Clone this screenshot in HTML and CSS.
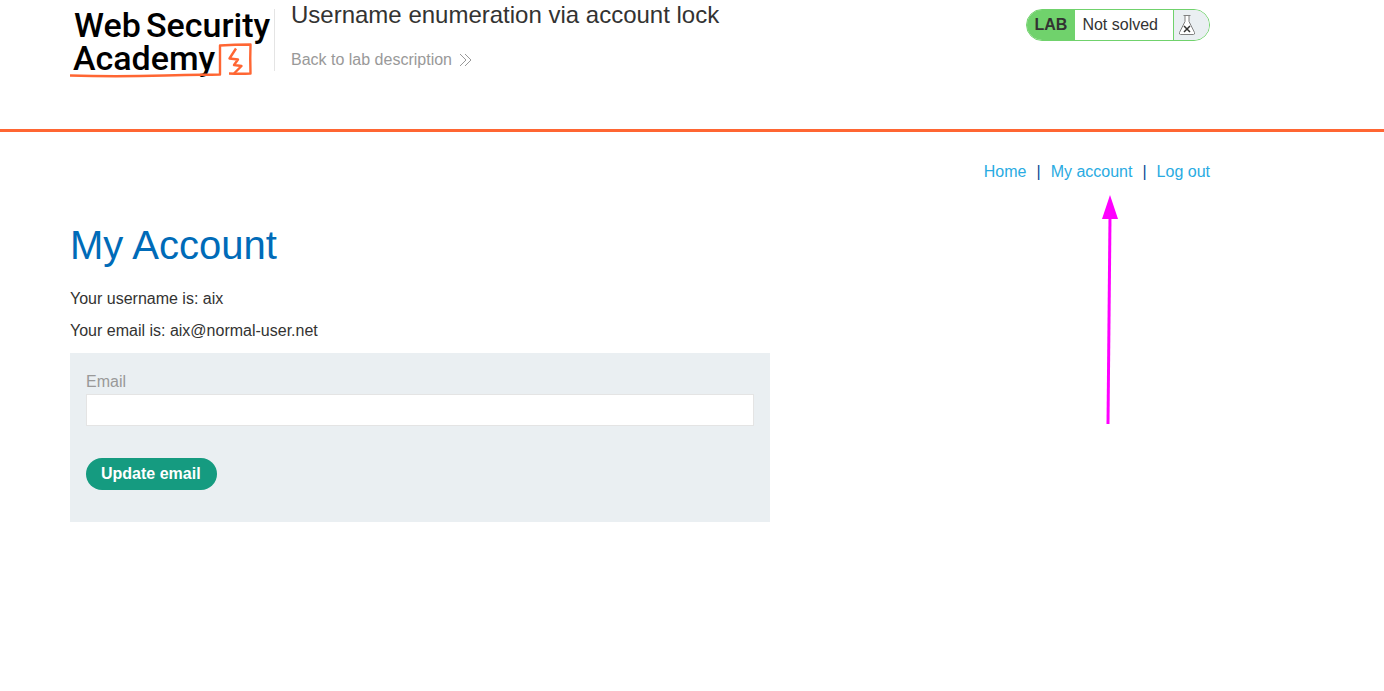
FILE: index.html
```html
<!DOCTYPE html>
<html lang="en">
<head>
<meta charset="utf-8">
<title>Username enumeration via account lock</title>
<link rel="stylesheet" href="styles.css">
</head>
<body>
<header class="lab-header">
  <div class="container lab-bar">
    <svg class="logo" viewBox="0 0 200 72" role="img" aria-label="Web Security Academy">
      <g class="logo-text">
        <text x="4" y="29">Web</text>
        <text x="76" y="29">Security</text>
        <text x="3" y="62">Academy</text>
      </g>
      <path class="logo-line" d="M0 67.500C30 68.500 60 68.500 95 67.500S130 67 150 66.500V37.500Q165 36.500 180.500 36.500Q180 50 180.500 65.500Q170 66 159 65.500"/>
      <path class="logo-line" d="M166 40.500L159.500 50.500L168 51.500L164 57L171.500 58L164 65.500"/>
    </svg>
    <div class="title-block">
      <h2 class="lab-title">Username enumeration via account lock</h2>
      <a class="back-link" href="#">Back to lab description
        <svg class="chevrons" viewBox="0 0 13 14" aria-hidden="true"><path d="M1 1l6 6-6 6M6 1l6 6-6 6"/></svg>
      </a>
    </div>
    <div class="status">
      <span class="status-tag">LAB</span>
      <span class="status-text">Not solved</span>
      <span class="status-icon">
        <svg viewBox="0 0 18 22" aria-hidden="true">
          <path class="flask" d="M5.500 1.500h7M7 1.500v6L1.500 18.500Q1 20.500 2.500 20.500H15.500Q17 20.500 16.500 18.500L11 7.500V1.500"/>
          <path class="cross" d="M6 12l6 6M12 12l-6 6"/>
        </svg>
      </span>
    </div>
  </div>
</header>
<main class="container page">
  <nav class="top-links">
    <a href="#">Home</a><span>|</span><a class="current" href="#">My account
      <svg class="pointer" viewBox="0 0 18 230" aria-hidden="true"><path class="shaft" d="M9 22L7 229"/><path class="tip" d="M9 0L17 24H1Z"/></svg></a><span>|</span><a href="#">Log out</a>
  </nav>
  <h1 class="page-title">My Account</h1>
  <p class="detail">Your username is: aix</p>
  <p class="detail">Your email is: aix@normal-user.net</p>
  <form class="email-form">
    <label for="email">Email</label>
    <input id="email" type="email" name="email">
    <button type="submit">Update email</button>
  </form>
</main>
</body>
</html>
```
FILE: styles.css
```css
* { box-sizing: border-box; }
body {
  margin: 0;
  background: #fff;
  color: #333332;
  font: 16px/24px "Liberation Sans", Arial, sans-serif;
}
a { color: #29abe2; text-decoration: none; }
.container {
  max-width: 1280px;
  padding: 0 70px;
}
.lab-header {
  height: 132px;
  border-bottom: 3px solid #ff6633;
}
.lab-bar {
  display: flex;
  align-items: flex-start;
  padding-top: 8px;
}
.logo { width: 200px; height: 72px; flex: none; overflow: visible; }
.logo-text {
  font: 500 34px "Roboto", sans-serif;
  fill: #000;
}
.logo-line {
  fill: none;
  stroke: #ff6633;
  stroke-width: 2.4px;
  stroke-linejoin: round;
}
.title-block {
  height: 62px;
  margin: 1px 0 0 4px;
  padding-left: 16px;
  border-left: 1px solid #e4e4e4;
}
.lab-title {
  margin: -8px 0 19px;
  font-size: 24px;
  line-height: 28px;
  font-weight: 400;
}
.back-link {
  display: flex;
  align-items: center;
  gap: 7px;
  color: #999;
}
.chevrons {
  width: 13px;
  height: 14px;
  fill: none;
  stroke: #999;
}
.status {
  display: flex;
  height: 32px;
  margin: 1px 0 0 auto;
  overflow: hidden;
  border: 1px solid #70d26c;
  border-radius: 16px;
  line-height: 30px;
}
.status-tag {
  padding: 0 8px;
  background: #70d26c;
  font-weight: 700;
}
.status-text { padding: 0 15px 0 7px; }
.status-icon {
  display: flex;
  align-items: center;
  width: 36px;
  padding-left: 4px;
  border-left: 1px solid #70d26c;
  background: #eaeff2;
}
.status-icon svg { width: 18px; height: 22px; }
.flask { fill: #fff; stroke: #808080; }
.cross { fill: none; stroke: #333332; stroke-width: 1.5px; }
.page { padding-top: 28px; }
.top-links {
  display: flex;
  justify-content: flex-end;
  gap: 10px;
  color: #0b4a94;
}
.current { position: relative; }
.pointer {
  position: absolute;
  top: 35px;
  right: 13px;
  width: 18px;
  height: 230px;
}
.shaft { stroke: #ff00ff; stroke-width: 3px; }
.tip { fill: #ff00ff; }
.page-title {
  margin: 37px 0 18px;
  color: #006bb8;
  font-size: 40px;
  line-height: 48px;
  font-weight: 400;
}
.detail { margin: 0 0 8px; }
.email-form {
  display: flex;
  flex-direction: column;
  align-items: flex-start;
  max-width: 700px;
  margin-top: 10px;
  padding: 17px 16px 32px;
  background: #eaeff2;
}
.email-form label { color: #999; }
.email-form input {
  width: 100%;
  height: 32px;
  margin-bottom: 32px;
  padding: 0 8px;
  border: 1px solid #e4e4e4;
  background: #fff;
  font: inherit;
}
.email-form button {
  height: 32px;
  padding: 0 16px 0 15px;
  border: 0;
  border-radius: 16px;
  background: #159b80;
  color: #fff;
  font: inherit;
  font-weight: 700;
}
```
